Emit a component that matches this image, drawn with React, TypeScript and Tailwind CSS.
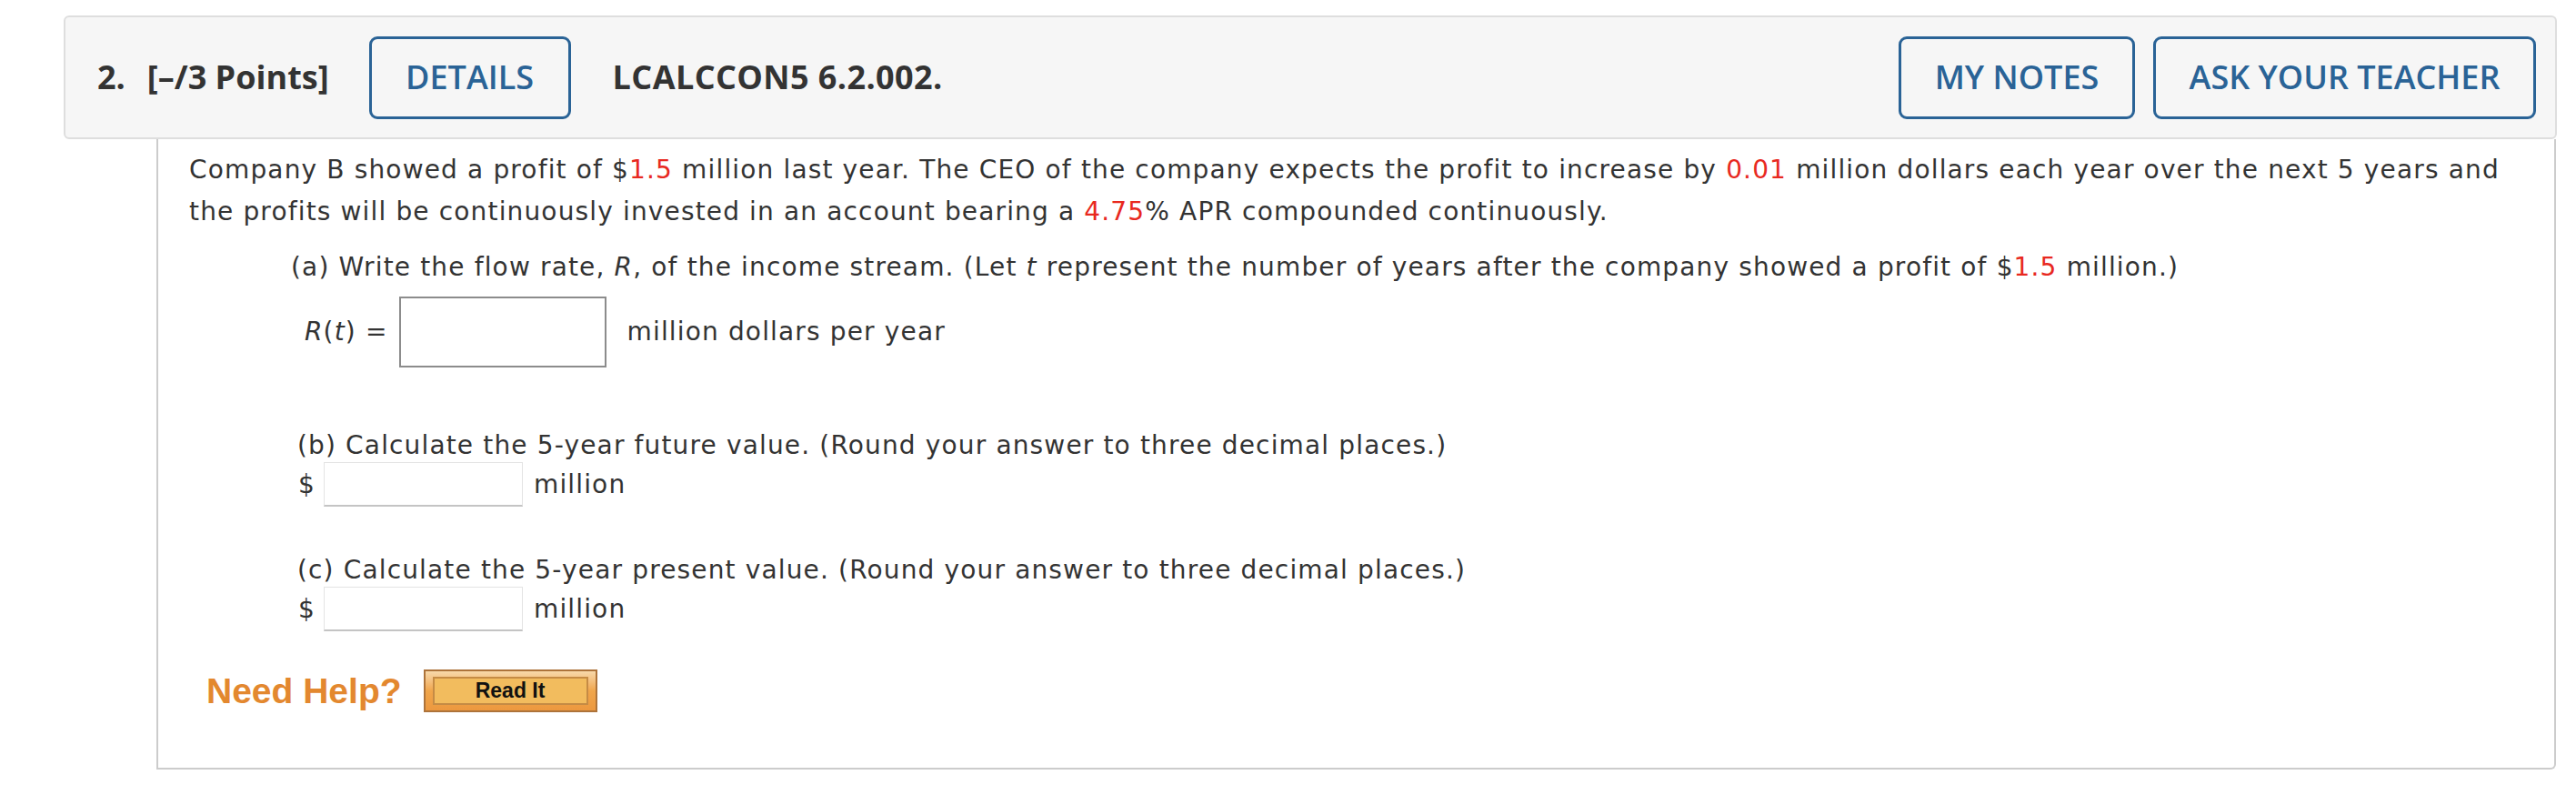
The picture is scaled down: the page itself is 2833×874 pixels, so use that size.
import React from "react";

const Red = ({ children }: { children: React.ReactNode }) => (
    <span className="text-[#e8291f]">{children}</span>
);

export default function App() {
    return (
        <div className="min-h-screen w-full bg-white">
            <div className="pt-[17px] pl-[70px] pr-[21px]">

                {/* Question header */}
                <header className="flex h-[136px] items-center rounded-[6px] border-2 border-[#dedede] bg-[#f6f6f6] pl-[35px] pr-[21px] font-['Open_Sans',sans-serif] text-[#333333]">
                    <span className="text-[36px] font-bold">2.</span>
                    <span className="ml-[24px] text-[36px] font-bold">[–/3 Points]</span>
                    <button className="ml-[44px] h-[91px] w-[222px] rounded-[9px] border-[3px] border-[#2a6396] text-[36px] font-semibold text-[#2a6396]">
                        DETAILS
                    </button>
                    <span className="ml-[46px] text-[36px] font-bold tracking-[0.4px]">LCALCCON5 6.2.002.</span>
                    <div className="ml-auto flex gap-[20px]">
                        <button className="h-[91px] w-[260px] rounded-[9px] border-[3px] border-[#2a6396] text-[36px] font-semibold text-[#2a6396]">
                            MY NOTES
                        </button>
                        <button className="h-[91px] w-[421px] rounded-[9px] border-[3px] border-[#2a6396] text-[36px] font-semibold text-[#2a6396]">
                            ASK YOUR TEACHER
                        </button>
                    </div>
                </header>

                {/* Question body */}
                <div className="ml-[102px] mr-[1px] h-[693px] rounded-br-[6px] border-2 border-t-0 border-[#cccccc] px-[34px] pt-[11px] font-['DejaVu_Sans',sans-serif] text-[28px] leading-[46px] tracking-[1.15px] text-[#333333]">
                    <p>
                        Company B showed a profit of $<Red>1.5</Red> million last year. The CEO of the company expects the profit to increase by <Red>0.01</Red> million dollars each year over the next 5 years and the profits will be continuously invested in an account bearing a <Red>4.75</Red>% APR compounded continuously.
                    </p>

                    <p className="mt-[15px] pl-[112px]">
                        (a) Write the flow rate, <i>R</i>, of the income stream. (Let <i>t</i> represent the number of years after the company showed a profit of $<Red>1.5</Red> million.)
                    </p>
                    <div className="mt-[9px] flex items-center pl-[127px]">
                        <span>
                            <i>R</i>(<i>t</i>) =
                        </span>
                        <div className="ml-[12px] h-[78px] w-[228px] border-2 border-[#8c8c8c] bg-white" />
                        <span className="ml-[23px]">million dollars per year</span>
                    </div>

                    <p className="mt-[68px] pl-[119px] leading-[36px]">
                        (b) Calculate the 5-year future value. (Round your answer to three decimal places.)
                    </p>
                    <div className="flex items-center pl-[120px]">
                        <span>$</span>
                        <div className="ml-[9px] h-[49px] w-[219px] border border-b-2 border-[#e4e4e4] border-b-[#c4c4c4] bg-white" />
                        <span className="ml-[12px]">million</span>
                    </div>

                    <p className="mt-[52px] pl-[119px] leading-[36px]">
                        (c) Calculate the 5-year present value. (Round your answer to three decimal places.)
                    </p>
                    <div className="flex items-center pl-[120px]">
                        <span>$</span>
                        <div className="ml-[9px] h-[49px] w-[219px] border border-b-2 border-[#e4e4e4] border-b-[#c4c4c4] bg-white" />
                        <span className="ml-[12px]">million</span>
                    </div>

                    {/* Help */}
                    <div className="mt-[42px] flex items-center pl-[19px] font-['Liberation_Sans',Arial,sans-serif] tracking-normal">
                        <span className="text-[39px] font-bold leading-none text-[#e3882f]">Need Help?</span>
                        <button className="ml-[24px] h-[47px] w-[191px] border-2 border-[#ad733a] bg-gradient-to-b from-[#f7d8a9] via-[#f0a64b] to-[#ec983f] px-[8px] py-[6px]">
                            <span className="flex h-full w-full items-center justify-center border-2 border-[#c58b45] bg-[#f2bc5e] text-[23px] font-bold leading-none text-[#111111]">
                                Read It
                            </span>
                        </button>
                    </div>
                </div>
            </div>
        </div>
    );
}
